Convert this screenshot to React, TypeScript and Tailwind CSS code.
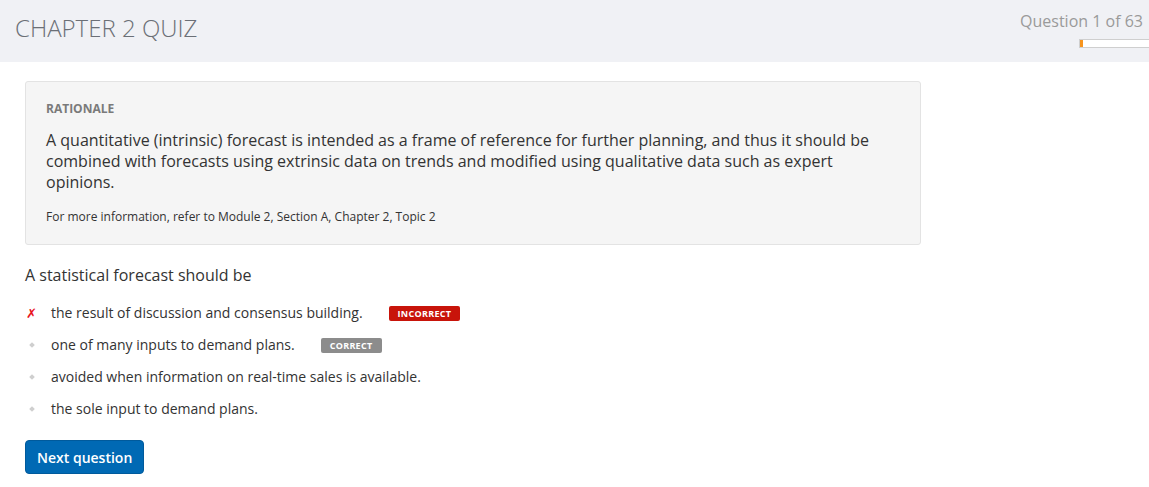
import React from "react";

type Option = { text: string; status?: "incorrect" | "correct" };

const options: Option[] = [
  { text: "the result of discussion and consensus building.", status: "incorrect" },
  { text: "one of many inputs to demand plans.", status: "correct" },
  { text: "avoided when information on real-time sales is available." },
  { text: "the sole input to demand plans." },
];

function Marker({ wrong }: { wrong: boolean }) {
  if (wrong) {
    return (
      <span className="w-[26px] shrink-0 pl-[1px] text-[13px] font-bold italic leading-none text-[#e8141c] [font-family:'DejaVu_Sans',sans-serif]">
        ✗
      </span>
    );
  }
  return (
    <span className="flex w-[26px] shrink-0 pl-[5px]">
      <span className="block h-[4px] w-[4px] rotate-45 bg-[#cfcfcf]" />
    </span>
  );
}

export default function App() {
  return (
    <div className="min-h-[487px] bg-white text-[#333] [font-family:'Open_Sans',sans-serif]">
      {/* Header */}
      <div className="flex h-[62px] items-start justify-between bg-[#f0f1f5] pl-[15px]">
        <h1 className="pt-[11px] text-[24px] font-light leading-[34px] text-[#6b6f76]">
          CHAPTER 2 QUIZ
        </h1>
        <div className="flex flex-col items-end pt-[10px]">
          <span className="pr-[6px] text-[16px] leading-[22px] text-[#9a9a9a]">Question 1 of 63</span>
          <div className="mt-[7px] flex h-[9px] w-[70px] border-y border-l border-[#cfcfcf] bg-white">
            <div className="h-full w-[3px] bg-[#f7941d]" />
          </div>
        </div>
      </div>

      <div className="w-[921px] pl-[25px] pt-[19px]">
        {/* Rationale */}
        <div className="rounded-[3px] border border-[#e3e3e3] bg-[#f5f5f5] px-[20px] pb-[19px] pt-[18px]">
          <div className="text-[12px] font-bold leading-[17px] text-[#7a7a7a]">RATIONALE</div>
          <p className="mt-[13px] text-[16px] leading-[21px] text-[#333]">
            A quantitative (intrinsic) forecast is intended as a frame of reference for further planning, and thus it should be combined with forecasts using extrinsic data on trends and modified using qualitative data such as expert opinions.
          </p>
          <p className="mt-[15px] text-[12px] leading-[17px] text-[#333]">
            For more information, refer to Module 2, Section A, Chapter 2, Topic 2
          </p>
        </div>

        {/* Question */}
        <div className="mt-[19px] text-[16px] leading-[22px] text-[#333]">A statistical forecast should be</div>

        <ul className="mt-[11px] flex flex-col">
          {options.map((o) => (
            <li key={o.text} className="flex h-[32px] items-center">
              <Marker wrong={o.status === "incorrect"} />
              <span className="text-[14px] leading-[20px] text-[#333]">{o.text}</span>
              {o.status === "incorrect" && (
                <span className="ml-[26px] rounded-[2px] bg-[#c8140a] px-[9px] text-[9px] font-bold leading-[15px] tracking-[0.3px] text-white">
                  INCORRECT
                </span>
              )}
              {o.status === "correct" && (
                <span className="ml-[26px] rounded-[2px] bg-[#8c8c8c] px-[9px] text-[9px] font-bold leading-[15px] tracking-[0.3px] text-white">
                  CORRECT
                </span>
              )}
            </li>
          ))}
        </ul>

        <button className="mt-[15px] h-[34px] rounded-[4px] border border-[#005a9c] bg-[#0069b4] px-[11px] text-[14px] font-semibold text-white">
          Next question
        </button>
      </div>
    </div>
  );
}
